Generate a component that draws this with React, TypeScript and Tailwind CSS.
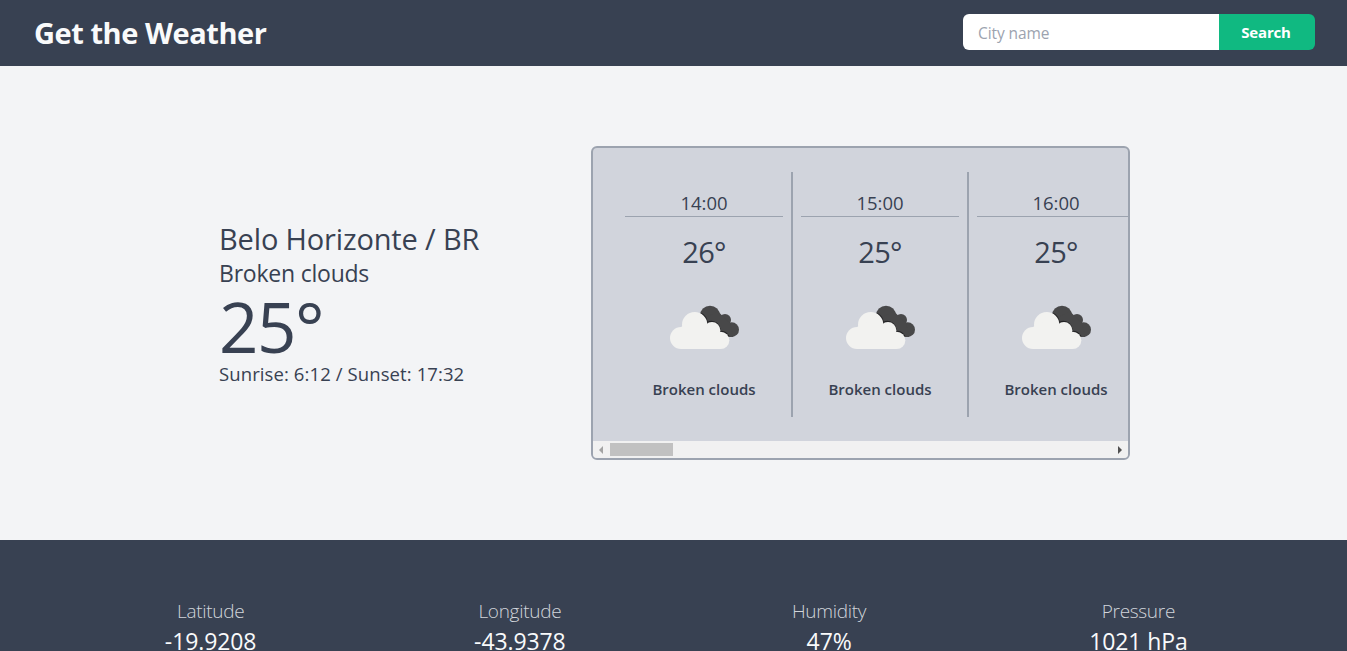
const hours = [
  { time: '14:00', temp: '26°', text: 'Broken clouds' },
  { time: '15:00', temp: '25°', text: 'Broken clouds' },
  { time: '16:00', temp: '25°', text: 'Broken clouds' },
];

const details = [
  { label: 'Latitude', value: '-19.9208' },
  { label: 'Longitude', value: '-43.9378' },
  { label: 'Humidity', value: '47%' },
  { label: 'Pressure', value: '1021 hPa' },
];

function BrokenClouds() {
  return (
    <svg className="h-[60px] w-20" viewBox="42 15 240 180" aria-hidden="true">
      <g fill="#484849">
        <circle cx="180" cy="77" r="30" />
        <circle cx="225" cy="90" r="18" />
        <circle cx="245" cy="119" r="22" />
        <path d="M160 85 L205 65 L240 100 L250 141 L215 141 L170 110Z" />
      </g>
      <g fill="none" stroke="#242426" strokeWidth="4">
        <path d="M153 70 A38 38 0 0 1 172 98 A25 25 0 0 1 209 124 A28 28 0 0 1 236 139" />
      </g>
      <g fill="#f2f2f0">
        <circle cx="93" cy="144" r="33" />
        <circle cx="134" cy="104" r="38" />
        <circle cx="186" cy="121" r="25" />
        <circle cx="212" cy="151" r="26" />
        <path d="M93 177 L93 111 L134 90 L190 110 L212 130 L212 177Z" />
      </g>
    </svg>
  );
}

function Header() {
  return (
    <header className="flex h-[66px] shrink-0 items-center justify-between bg-[#384152] pr-8 pl-[34px]">
      <h1 className="text-[29px] leading-9 font-bold tracking-[-0.45px] text-gray-50">Get the Weather</h1>
      <form className="mb-0.5 flex h-9" onSubmit={(e) => e.preventDefault()}>
        <input
          className="w-64 rounded-l-md bg-white pr-4 pl-[15px] pt-1 text-[15.5px] tracking-[-0.1px] text-gray-700 outline-none placeholder:text-[#9ca3af]"
          placeholder="City name"
        />
        <button className="w-24 rounded-r-md bg-[#10b981] pr-0.5 text-[15px] font-bold tracking-[-0.2px] text-white">
          Search
        </button>
      </form>
    </header>
  );
}

function CurrentWeather() {
  return (
    <section className="w-[372px] pt-[155px] text-[#384152]">
      <h2 className="text-[29px] leading-9 tracking-[-0.15px]">Belo Horizonte / BR</h2>
      <p className="text-[23px] leading-8 tracking-[-0.22px]">Broken clouds</p>
      <p className="pt-0.5 text-[69px] leading-[71px] tracking-[-1.5px]">25°</p>
      <p className="-mt-0.5 text-[18.5px] leading-7 tracking-[0.1px]">Sunrise: 6:12 / Sunset: 17:32</p>
    </section>
  );
}

function HourlyForecast() {
  return (
    <section className="mt-20 flex h-[314px] w-[539px] flex-col overflow-hidden rounded-md border-2 border-[#9ca3af] bg-[#d1d4dc]">
      <div className="flex min-h-0 flex-1 overflow-hidden p-6">
        {hours.map((hour) => (
          <article
            key={hour.time}
            className="flex h-[245px] w-44 shrink-0 flex-col items-center border-r-2 border-[#9ca3af] px-2 text-[#384152]"
          >
            <p className="mt-[17px] h-7 w-full border-b border-[#9ca3af] text-center text-[18.5px] leading-7">
              {hour.time}
            </p>
            <p className="mt-[17px] text-[29px] leading-9 tracking-[-0.7px]">{hour.temp}</p>
            <div className="mt-[25px]">
              <BrokenClouds />
            </div>
            <p className="mt-[22px] text-[15px] leading-6 font-semibold">{hour.text}</p>
          </article>
        ))}
      </div>
      <div className="flex h-[17px] items-center bg-[#f1f1f1]">
        <svg className="h-[17px] w-[17px]" viewBox="0 0 17 17" aria-hidden="true">
          <path d="M10 5v8L6 9z" fill="#a3a3a3" />
        </svg>
        <div className="h-[13px] w-[63px] bg-[#c1c1c1]" />
        <svg className="ml-auto h-[17px] w-[17px]" viewBox="0 0 17 17" aria-hidden="true">
          <path d="M7 5v8l4-4z" fill="#505050" />
        </svg>
      </div>
    </section>
  );
}

export default function App() {
  return (
    <div className="flex h-[651px] flex-col overflow-hidden bg-[#f3f4f6] font-['Open_Sans','Noto_Sans',sans-serif]">
      <Header />
      <main className="flex h-[474px] shrink-0 pl-[219px]">
        <CurrentWeather />
        <HourlyForecast />
      </main>
      <footer className="grid flex-1 grid-cols-4 bg-[#384152] pt-[57px] pr-[54px] pl-14 text-center">
        {details.map((item) => (
          <div key={item.label}>
            <p className="text-[19px] leading-7 font-light tracking-[-0.3px] text-[#d1d5db]">{item.label}</p>
            <p className="text-[23px] leading-8 tracking-[-0.1px] text-gray-50">{item.value}</p>
          </div>
        ))}
      </footer>
    </div>
  );
}
